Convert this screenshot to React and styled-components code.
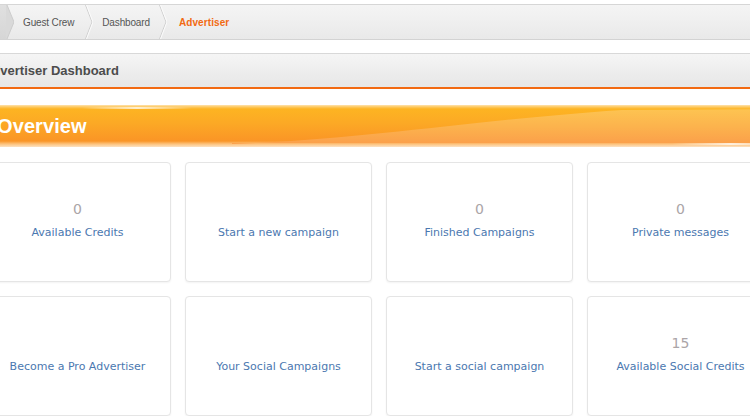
import React from "react";
import styled, { createGlobalStyle } from "styled-components";

const GlobalStyle = createGlobalStyle`
  body {
    margin: 0;
    background: #ffffff;
    overflow: hidden;
    font-family: "DejaVu Sans", Verdana, sans-serif;
  }
`;

// page is wider than the window and shifted left, as in the capture
const Page = styled.div`
  margin-left: -18px;
  width: 808px;
  padding-top: 4px;
`;

const Breadcrumbs = styled.nav`
  display: flex;
  align-items: stretch;
  height: 34px;
  border-top: 1px solid #d6d6d6;
  border-bottom: 1px solid #d3d3d3;
  background: linear-gradient(to bottom, #f4f4f4 0%, #efefef 50%, #e9e9e9 100%);
  font-family: "Liberation Sans", Arial, sans-serif;
  font-size: 10px;
  color: #555555;
`;

const HomeCrumb = styled.div`
  width: 24px;
  background: linear-gradient(to bottom, #e0e0e0, #d6d6d6);
`;

const Crumb = styled.span`
  display: flex;
  align-items: center;
  padding: 0 ${(p) => (p.$pr ? p.$pr : 11)}px 0 ${(p) => (p.$pl ? p.$pl : 10)}px;
  color: ${(p) => (p.$active ? "#f26a12" : "#555555")};
  font-weight: ${(p) => (p.$active ? "bold" : "normal")};
  letter-spacing: ${(p) => (p.$active ? "0.1px" : "-0.15px")};
  white-space: nowrap;
`;

const TitleBar = styled.div`
  display: flex;
  align-items: center;
  margin-top: 13px;
  height: 33px;
  padding-left: 1px;
  border-top: 1px solid #d8d8d8;
  border-bottom: 2px solid #f26a12;
  background: linear-gradient(to bottom, #f5f5f5, #ececec 60%, #e7e7e7);
`;

const Title = styled.h1`
  margin: 0;
  font-family: "Liberation Sans", Arial, sans-serif;
  font-size: 13px;
  font-weight: bold;
  color: #4c4c4c;
`;

const OverviewBar = styled.div`
  position: relative;
  display: flex;
  align-items: center;
  margin-top: 16px;
  height: 42px;
  padding-left: 15px;
  overflow: hidden;
  background: linear-gradient(
    to bottom,
    #fee2ae 0px,
    #fdc85e 2px,
    #fdb422 4px,
    #fca925 18px,
    #fa9526 36px,
    #fcc27c 39px,
    #fde2c2 42px
  );
`;

const BarWave = styled.svg`
  position: absolute;
  left: 0;
  top: 0;
`;

const OverviewTitle = styled.h2`
  position: relative;
  margin: 0;
  font-family: "Liberation Sans", Arial, sans-serif;
  font-size: 20px;
  font-weight: bold;
  color: #ffffff;
  letter-spacing: 0.1px;
`;

const Grid = styled.div`
  display: grid;
  grid-template-columns: repeat(4, 187px);
  grid-auto-rows: 120px;
  gap: 14px;
  margin-top: 15px;
  padding-left: 2px;
`;

const Card = styled.a`
  display: flex;
  flex-direction: column;
  align-items: center;
  box-sizing: border-box;
  padding-top: 36px;
  border: 1px solid #e5e5e5;
  border-radius: 4px;
  box-shadow: 0 1px 2px rgba(0, 0, 0, 0.05);
  background: #ffffff;
  text-decoration: none;
  cursor: pointer;
`;

const Count = styled.div`
  height: 20px;
  line-height: 20px;
  font-size: 14px;
  color: #aba5a7;
`;

const Label = styled.div`
  margin-top: 7px;
  line-height: 14px;
  font-size: 11px;
  color: #4b78b0;
  white-space: nowrap;
`;

const Chevron = () => (
  <svg width="8" height="34" viewBox="0 0 8 34">
    <polyline points="0.5,0 7,17 0.5,34" fill="none" stroke="#cfcfcf" strokeWidth="1" />
    <polyline points="1.5,0 8,17 1.5,34" fill="none" stroke="#fbfbfb" strokeWidth="1" />
  </svg>
);

const HomeTip = () => (
  <svg width="8" height="34" viewBox="0 0 8 34">
    <polygon points="0,0 1,0 8,17 1,34 0,34" fill="#d9d9d9" />
    <polyline points="1,0 8,17 1,34" fill="none" stroke="#cdcdcd" strokeWidth="1" />
  </svg>
);

const tiles = [
  { count: "0", label: "Available Credits" },
  { label: "Start a new campaign" },
  { count: "0", label: "Finished Campaigns" },
  { count: "0", label: "Private messages" },
  { label: "Become a Pro Advertiser" },
  { label: "Your Social Campaigns" },
  { label: "Start a social campaign" },
  { count: "15", label: "Available Social Credits" },
];

export default function App() {
  return (
    <Page>
      <GlobalStyle />
      <Breadcrumbs>
        <HomeCrumb />
        <HomeTip />
        <Crumb $pl={9} $pr={11}>Guest Crew</Crumb>
        <Chevron />
        <Crumb $pl={9} $pr={9}>Dashboard</Crumb>
        <Chevron />
        <Crumb $active $pl={12}>Advertiser</Crumb>
      </Breadcrumbs>

      <TitleBar>
        <Title>Advertiser Dashboard</Title>
      </TitleBar>

      <OverviewBar>
        <BarWave width="808" height="42" viewBox="0 0 808 42">
          <defs>
            <linearGradient id="light" x1="0" y1="0" x2="0" y2="1">
              <stop offset="0" stopColor="#fdc451" />
              <stop offset="0.5" stopColor="#fcb34d" />
              <stop offset="1" stopColor="#fb9f4a" />
            </linearGradient>
            <linearGradient id="gloss" x1="0" y1="0" x2="1" y2="0">
              <stop offset="0" stopColor="#ffffff" stopOpacity="0" />
              <stop offset="0.5" stopColor="#ffffff" stopOpacity="0.75" />
              <stop offset="1" stopColor="#ffffff" stopOpacity="0" />
            </linearGradient>
          </defs>
          <path
            d="M250 39 C 390 34, 480 16, 640 5 L 808 4 L 808 38 L 250 38 Z"
            fill="url(#light)"
          />
          <rect x="100" y="2" width="110" height="2" fill="url(#gloss)" />
          <rect x="690" y="38" width="118" height="2" fill="url(#gloss)" />
        </BarWave>
        <OverviewTitle>Overview</OverviewTitle>
      </OverviewBar>

      <Grid>
        {tiles.map((t) => (
          <Card key={t.label}>
            <Count>{t.count}</Count>
            <Label>{t.label}</Label>
          </Card>
        ))}
      </Grid>
    </Page>
  );
}
